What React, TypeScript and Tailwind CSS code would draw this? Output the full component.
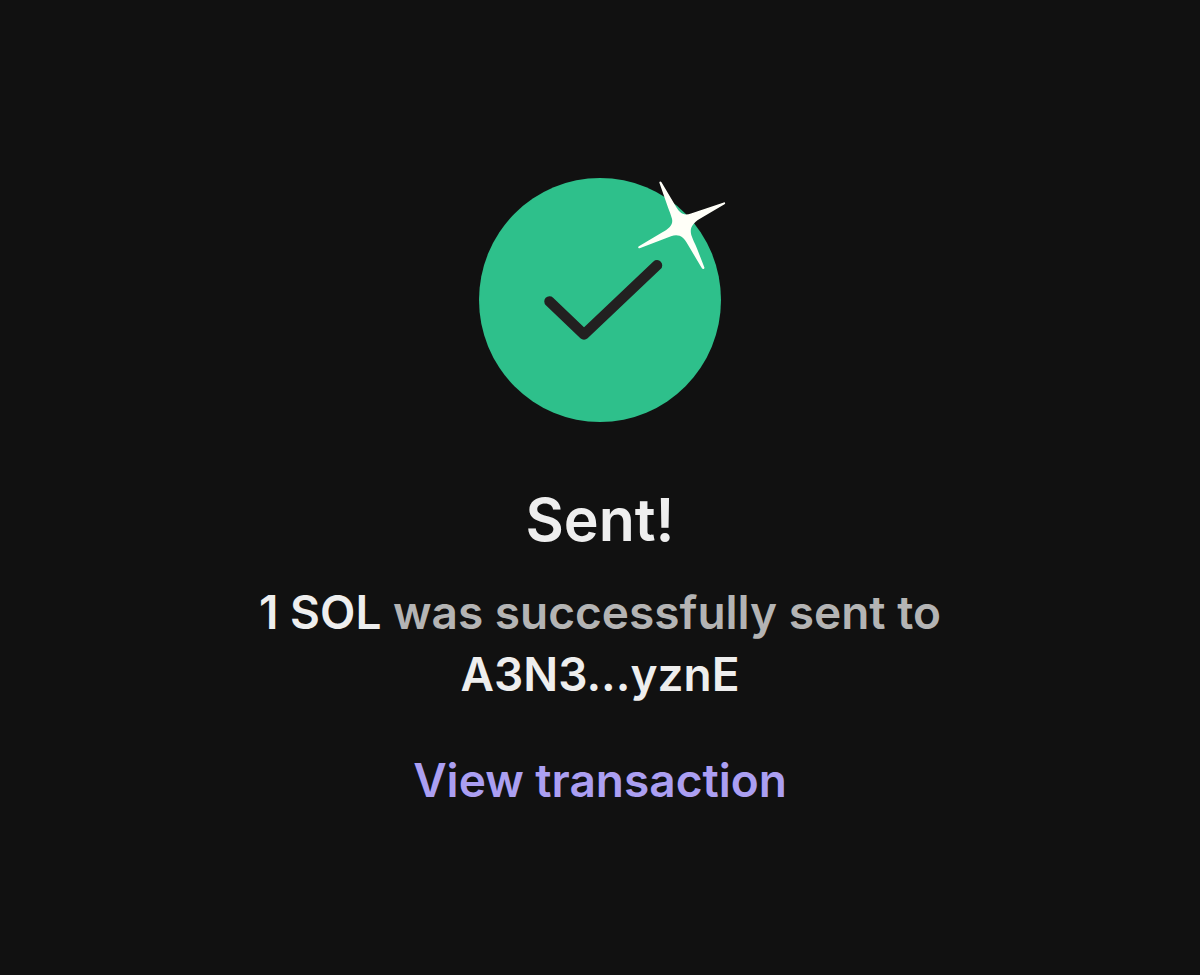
function SuccessIcon() {
  return (
    <svg viewBox="0 0 260 260" className="h-[260px] w-[260px]" fill="none" role="img" aria-label="Success">
      <ellipse cx="130" cy="130" rx="121" ry="122" fill="#2EC08B" />
      <path
        d="M79.5 131.500L114 164.500L187 95.300"
        stroke="#222020"
        strokeWidth="10.5"
        strokeLinecap="round"
        strokeLinejoin="round"
      />
      <path
        d="M189.300 12.400C189.500 11.300 190.900 11.200 191.500 12.200L205 35C209 42 213 46.800 221 43.500L253.800 32.400C255.200 32.100 255.700 33.500 254.500 34.200L229.500 49C222.500 53.500 219.500 58 221.300 65C222.500 69 225 73.500 227 78.500L234.400 97.500C234.700 99 232.700 99.600 231.900 98.300L217.500 74C213.500 67 209 63.500 201 66.300L169.700 78.300C168.200 78.700 167.600 77 168.900 76.200L192 62.500C199.500 58.500 203.500 54.500 201.900 48.500C201 45 199.500 41.500 198.200 38Z"
        fill="#FFFFF8"
      />
    </svg>
  );
}

export default function App() {
  return (
    <main className="flex min-h-screen flex-col items-center bg-[#111111] px-8 pt-[170px] pb-16 text-center font-['Inter','Liberation_Sans',sans-serif]">
      <SuccessIcon />
      <h1 className="mt-[52px] text-[59px] leading-[76px] font-semibold text-[#EEEEEE]">Sent!</h1>
      <p className="mt-[23px] max-w-[720px] text-[46px] leading-[62px] font-semibold text-[#B4B4B4]">
        <span className="text-[#EEEEEE]">1 SOL</span> was successfully sent to{" "}
        <span className="text-[#EEEEEE]">A3N3...yznE</span>
      </p>
      <a href="#transaction" className="mt-11 text-[46px] leading-[62px] font-semibold text-[#AB9FF2]">
        View transaction
      </a>
    </main>
  );
}
